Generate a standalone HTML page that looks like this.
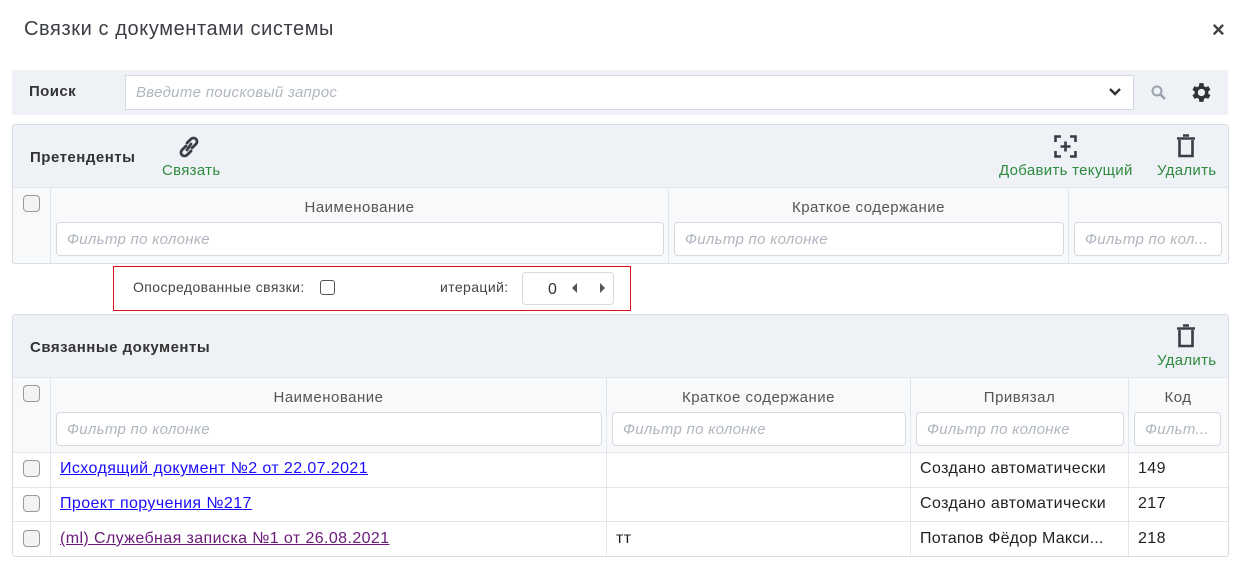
<!DOCTYPE html>
<html><head><meta charset="utf-8"><style>
*{box-sizing:border-box;margin:0;padding:0}
body{width:1240px;height:570px;background:#fff;font-family:"Liberation Sans","DejaVu Sans",sans-serif;color:#333;position:relative;overflow:hidden}
.a{position:absolute;white-space:nowrap}
.bg{background:#eef1f6}
.inp{position:absolute;background:#fff;border:1px solid #d6dae0;border-radius:4px;color:#b0b6bf;font-style:italic;font-size:15px;letter-spacing:.3px;padding-left:10px;line-height:33px;overflow:hidden;white-space:nowrap}
.cb{position:absolute;width:17px;height:17px;border:1px solid #999;border-radius:4px;background:#f3f3f3}
.g{color:#2e8b3e;font-size:15px;letter-spacing:.3px}
.hd{color:#555;font-size:15px;letter-spacing:.5px;text-align:center}
.vl{position:absolute;width:1px;background:#e2e5ea}
.hl{position:absolute;height:1px;background:#e2e5ea}
.t{font-size:16px;letter-spacing:.4px;color:#222}
a{color:#1a0dff;text-decoration:underline}
</style></head><body>
<div class="a" style="left:24px;top:18px;font-size:20px;letter-spacing:.6px;color:#3a3d44">Связки с документами системы</div>
<div class="a" style="left:1212px;top:17px;font-size:22px;font-weight:bold;color:#444">×</div>

<div class="a bg" style="left:12px;top:70px;width:1216px;height:45px"></div>
<div class="a" style="left:29px;top:83px;font-size:15px;font-weight:bold;letter-spacing:.4px">Поиск</div>
<div class="inp" style="left:125px;top:75px;width:1009px;height:35px;border-radius:0">Введите поисковый запрос</div>
<svg class="a" style="left:1108px;top:87px" width="14" height="10"><path d="M2 2l5 5 5-5" stroke="#333" stroke-width="2.4" fill="none"/></svg>
<svg class="a" style="left:1150px;top:84px" width="18" height="18"><circle cx="7" cy="7" r="4.5" stroke="#9aa2ad" stroke-width="2" fill="none"/><path d="M10 10l5 5" stroke="#9aa2ad" stroke-width="2.5"/></svg>
<svg class="a" style="left:1188px;top:80px" width="25" height="25" viewBox="0 0 24 24"><path fill="#2f3338" d="M19.4 13a7.5 7.5 0 000-2l2.1-1.6-2-3.5-2.5 1a7 7 0 00-1.7-1L14.9 3h-4l-.4 2.9a7 7 0 00-1.7 1l-2.5-1-2 3.5L6.4 11a7.5 7.5 0 000 2l-2.1 1.6 2 3.5 2.5-1a7 7 0 001.7 1l.4 2.9h4l.4-2.9a7 7 0 001.7-1l2.5 1 2-3.5zM12.9 15.5a3.5 3.5 0 110-7 3.5 3.5 0 010 7z"/></svg>

<!-- panel 1 -->
<div class="a" style="left:12px;top:124px;width:1217px;height:140px;border:1px solid #d8dce3;border-radius:3px;background:#f8f9fa"></div>
<div class="a bg" style="left:13px;top:125px;width:1215px;height:62px"></div>
<div class="hl" style="left:13px;top:187px;width:1215px"></div>
<div class="a" style="left:30px;top:149px;font-size:15px;font-weight:bold;letter-spacing:.5px">Претенденты</div>
<svg class="a" style="left:177px;top:134px" width="24" height="26" viewBox="0 0 24 26"><g stroke="#3a3d44" stroke-width="2.8" fill="none" stroke-linecap="round"><path d="M10 9l4-4a3.5 3.5 0 015 5l-4 4"/><path d="M14 17l-4 4a3.5 3.5 0 01-5-5l4-4"/><path d="M10 16l4-6"/></g></svg>
<div class="a g" style="left:162px;top:162px">Связать</div>
<svg class="a" style="left:1054px;top:135px" width="23" height="23"><g stroke="#3a3d44" stroke-width="2.6" fill="none"><path d="M7 1.5H1.5V7M16 1.5h5.5V7M7 21.5H1.5V16M16 21.5h5.5V16"/><path d="M11.5 6.5v10M6.5 11.5h10"/></g></svg>
<div class="a g" style="left:999px;top:162px">Добавить текущий</div>
<svg class="a" style="left:1176px;top:134px" width="20" height="24"><g fill="none" stroke="#3a3d44" stroke-width="2.6"><path d="M1 4.5h18M7 1.5h6"/><path d="M3.5 6v16h13V6"/></g></svg>
<div class="a g" style="left:1157px;top:162px">Удалить</div>
<div class="cb" style="left:23px;top:195px"></div>
<div class="vl" style="left:50px;top:188px;height:75px"></div>
<div class="vl" style="left:668px;top:188px;height:75px"></div>
<div class="vl" style="left:1068px;top:188px;height:75px"></div>
<div class="a hd" style="left:51px;top:199px;width:617px">Наименование</div>
<div class="a hd" style="left:669px;top:199px;width:399px">Краткое содержание</div>
<div class="inp" style="left:56px;top:222px;width:608px;height:34px">Фильтр по колонке</div>
<div class="inp" style="left:674px;top:222px;width:390px;height:34px">Фильтр по колонке</div>
<div class="inp" style="left:1074px;top:222px;width:148px;height:34px">Фильтр по кол...</div>

<!-- red box -->
<div class="a" style="left:113px;top:266px;width:518px;height:45px;border:1px solid #e0101a"></div>
<div class="a" style="left:133px;top:279px;font-size:14px;letter-spacing:.4px;color:#444">Опосредованные связки:</div>
<div class="cb" style="left:320px;top:280px;width:15px;height:15px;background:#fff;border-color:#555;border-radius:3px"></div>
<div class="a" style="left:440px;top:279px;font-size:14px;letter-spacing:.4px;color:#444">итераций:</div>
<div class="a" style="left:522px;top:272px;width:92px;height:33px;border:1px solid #d6dae0;border-radius:4px"></div>
<div class="a" style="left:548px;top:281px;font-size:16px;color:#333">0</div>
<svg class="a" style="left:570px;top:282px" width="10" height="12"><path d="M7 1L2 6l5 5z" fill="#555"/></svg>
<svg class="a" style="left:597px;top:282px" width="10" height="12"><path d="M3 1l5 5-5 5z" fill="#555"/></svg>

<!-- panel 2 -->
<div class="a" style="left:12px;top:314px;width:1217px;height:243px;border:1px solid #d8dce3;border-radius:3px;background:#fff"></div>
<div class="a bg" style="left:13px;top:315px;width:1215px;height:62px"></div>
<div class="a" style="left:13px;top:378px;width:1215px;height:74px;background:#f8f9fa"></div>
<div class="hl" style="left:13px;top:377px;width:1215px"></div>
<div class="a" style="left:30px;top:339px;font-size:15px;font-weight:bold;letter-spacing:.5px">Связанные документы</div>
<svg class="a" style="left:1176px;top:324px" width="20" height="24"><g fill="none" stroke="#3a3d44" stroke-width="2.6"><path d="M1 4.5h18M7 1.5h6"/><path d="M3.5 6v16h13V6"/></g></svg>
<div class="a g" style="left:1157px;top:352px">Удалить</div>
<div class="cb" style="left:23px;top:385px"></div>
<div class="vl" style="left:50px;top:378px;height:178px"></div>
<div class="vl" style="left:606px;top:378px;height:178px"></div>
<div class="vl" style="left:910px;top:378px;height:178px"></div>
<div class="vl" style="left:1128px;top:378px;height:178px"></div>
<div class="a hd" style="left:51px;top:389px;width:555px">Наименование</div>
<div class="a hd" style="left:607px;top:389px;width:303px">Краткое содержание</div>
<div class="a hd" style="left:911px;top:389px;width:217px">Привязал</div>
<div class="a hd" style="left:1129px;top:389px;width:98px">Код</div>
<div class="inp" style="left:56px;top:412px;width:546px;height:34px">Фильтр по колонке</div>
<div class="inp" style="left:612px;top:412px;width:294px;height:34px">Фильтр по колонке</div>
<div class="inp" style="left:916px;top:412px;width:208px;height:34px">Фильтр по колонке</div>
<div class="inp" style="left:1134px;top:412px;width:87px;height:34px">Фильт...</div>
<div class="hl" style="left:13px;top:452px;width:1215px"></div>
<div class="hl" style="left:13px;top:487px;width:1215px"></div>
<div class="hl" style="left:13px;top:521px;width:1215px"></div>
<div class="cb" style="left:23px;top:460px"></div>
<div class="cb" style="left:23px;top:495px"></div>
<div class="cb" style="left:23px;top:530px"></div>
<div class="a t" style="left:60px;top:460px"><a>Исходящий документ №2 от 22.07.2021</a></div>
<div class="a t" style="left:60px;top:495px"><a>Проект поручения №217</a></div>
<div class="a t" style="left:60px;top:530px"><a style="color:#6b1a7a">(ml) Служебная записка №1 от 26.08.2021</a></div>
<div class="a t" style="left:616px;top:530px">тт</div>
<div class="a t" style="left:920px;top:460px">Создано автоматически</div>
<div class="a t" style="left:920px;top:495px">Создано автоматически</div>
<div class="a t" style="left:920px;top:530px;letter-spacing:.2px">Потапов Фёдор Макси...</div>
<div class="a t" style="left:1138px;top:460px">149</div>
<div class="a t" style="left:1138px;top:495px">217</div>
<div class="a t" style="left:1138px;top:530px">218</div>
</body></html>
